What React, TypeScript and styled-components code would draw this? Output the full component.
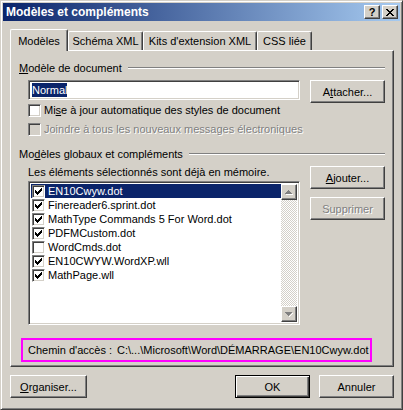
import React from "react";
import styled, { createGlobalStyle, css } from "styled-components";

const FACE = "#D4D0C8";
const SHADOW = "#808080";
const DARK = "#404040";
const FONT = `"Liberation Sans", Arial, sans-serif`;

const Global = createGlobalStyle`
  html, body { margin: 0; padding: 0; background: ${FACE}; }
  * { box-sizing: border-box; }
`;

const Window = styled.div`
  width: 403px;
  height: 410px;
  background: ${FACE};
  border: 1px solid;
  border-color: ${FACE} ${DARK} ${DARK} ${FACE};
  box-shadow: inset 1px 1px #fff, inset -1px -1px ${SHADOW};
  padding: 2px;
  display: flex;
  flex-direction: column;
  font-family: ${FONT};
  font-size: 11px;
  color: #000;
`;

const TitleBar = styled.div`
  height: 18px;
  background: linear-gradient(to right, #0a246a, #a6caf0);
  display: flex;
  align-items: center;
  padding: 0 2px 0 3px;
`;

const TitleText = styled.div`
  flex: 1;
  color: #fff;
  font-weight: bold;
  font-size: 12px;
  font-family: ${FONT};
  letter-spacing: 0px;
`;

const raised = css`
  background: ${FACE};
  border: 1px solid;
  border-color: #fff ${DARK} ${DARK} #fff;
  box-shadow: inset -1px -1px ${SHADOW}, inset 1px 1px ${FACE};
`;

const sunken = css`
  border: 1px solid;
  border-color: ${SHADOW} #fff #fff ${SHADOW};
  box-shadow: inset 1px 1px ${DARK}, inset -1px -1px ${FACE};
`;

const CaptionButton = styled.div`
  ${raised};
  width: 16px;
  height: 14px;
  display: flex;
  align-items: center;
  justify-content: center;
  font-weight: bold;
  font-size: 11px;
  line-height: 1;
  & + & { margin-left: 2px; }
`;

const Body = styled.div`
  flex: 1;
  display: flex;
  flex-direction: column;
  padding: 8px 0 0 7px;
`;

const TabRow = styled.div`
  display: flex;
  align-items: flex-end;
  height: 21px;
  position: relative;
  z-index: 1;
`;

const Tab = styled.div<{ $active?: boolean; $w: number }>`
  width: ${(p) => p.$w}px;
  height: ${(p) => (p.$active ? 22 : 19)}px;
  margin-bottom: ${(p) => (p.$active ? -1 : 0)}px;
  background: ${FACE};
  border-top: 1px solid #fff;
  border-left: 1px solid #fff;
  border-right: 1px solid ${DARK};
  box-shadow: inset -1px 0 ${SHADOW};
  border-radius: 2px 2px 0 0;
  display: flex;
  align-items: ${(p) => (p.$active ? "flex-start" : "center")};
  padding-top: ${(p) => (p.$active ? 5 : 0)}px;
  justify-content: center;
  white-space: nowrap;
`;

const Panel = styled.div`
  width: 384px;
  height: 317px;
  border: 1px solid;
  border-color: #fff ${DARK} ${DARK} #fff;
  box-shadow: inset -1px -1px ${SHADOW};
  padding: 10px 8px 0 8px;
  display: flex;
  flex-direction: column;
`;

const GroupHeader = styled.div<{ $mt?: number }>`
  display: flex;
  align-items: center;
  height: 13px;
  margin-top: ${(p) => p.$mt ?? 0}px;
`;

const GroupLine = styled.div`
  flex: 1;
  height: 2px;
  margin-left: 6px;
  border-top: 1px solid ${SHADOW};
  border-bottom: 1px solid #fff;
`;

const Indent = styled.div`
  padding-left: 9px;
  display: flex;
  flex-direction: column;
`;

const Row = styled.div<{ $mt?: number }>`
  display: flex;
  align-items: flex-start;
  justify-content: space-between;
  margin-top: ${(p) => p.$mt ?? 0}px;
`;

const TextBox = styled.div`
  ${sunken};
  background: #fff;
  width: 272px;
  height: 20px;
  padding: 2px 3px;
  display: flex;
  align-items: center;
`;

const Selected = styled.span`
  background: #0a246a;
  color: #fff;
  line-height: 14px;
`;

const Button = styled.div<{ $disabled?: boolean; $default?: boolean; $w?: number }>`
  ${raised};
  width: ${(p) => p.$w ?? 75}px;
  height: 23px;
  display: flex;
  align-items: center;
  justify-content: center;
  white-space: nowrap;
  ${(p) =>
    p.$disabled &&
    css`
      color: ${SHADOW};
      text-shadow: 1px 1px #fff;
    `}
  ${(p) =>
    p.$default &&
    css`
      border: none;
      outline: 1px solid #000;
      outline-offset: -1px;
      box-shadow: inset 1px 1px 0 1px #fff, inset -2px -2px ${DARK}, inset -3px -3px ${SHADOW};
      border: 1px solid #000;
      box-shadow: inset 1px 1px #fff, inset -1px -1px ${DARK}, inset -2px -2px ${SHADOW};
    `}
`;

const ButtonColumn = styled.div`
  display: flex;
  flex-direction: column;
  gap: 8px;
`;

const CheckRow = styled.label<{ $disabled?: boolean }>`
  display: flex;
  align-items: center;
  height: 19px;
  padding-bottom: 5px;
  gap: 3px;
  ${(p) =>
    p.$disabled &&
    css`
      color: ${SHADOW};
      text-shadow: 1px 1px #fff;
    `}
`;

const CheckBox = styled.div<{ $disabled?: boolean }>`
  ${sunken};
  width: 13px;
  height: 13px;
  flex: none;
  background: ${(p) => (p.$disabled ? FACE : "#fff")};
  display: flex;
  align-items: center;
  justify-content: center;
`;

const ListBox = styled.div`
  ${sunken};
  background: #fff;
  width: 272px;
  height: 144px;
  margin-top: 3px;
  padding: 2px;
  display: flex;
`;

const ListItems = styled.div`
  flex: 1;
  display: flex;
  flex-direction: column;
`;

const ListItem = styled.div<{ $selected?: boolean }>`
  height: 14px;
  display: flex;
  align-items: center;
  padding-left: 1px;
  gap: 3px;
  background: ${(p) => (p.$selected ? "#0a246a" : "transparent")};
  color: ${(p) => (p.$selected ? "#fff" : "#000")};
  white-space: nowrap;
`;

const ScrollBar = styled.div`
  width: 16px;
  display: flex;
  flex-direction: column;
  background: repeating-conic-gradient(${FACE} 0 25%, #fff 0 50%) 0 0 / 2px 2px;
`;

const ScrollTrack = styled.div`
  flex: 1;
`;

const ScrollArrow = styled.div`
  ${raised};
  width: 16px;
  height: 16px;
  display: flex;
  align-items: center;
  justify-content: center;
`;

const PathBox = styled.div`
  margin: 13px 0 0 2px;
  width: 351px;
  height: 24px;
  border: 2px solid #ff00ff;
  display: flex;
  align-items: center;
  padding-left: 5px;
  white-space: nowrap;
`;

const PathLabel = styled.span`
  width: 89px;
`;

const Footer = styled.div`
  display: flex;
  margin-top: 8px;
  width: 384px;
  align-items: center;
`;

const Spacer = styled.div`
  flex: 1;
`;

const FooterGap = styled.div`
  width: 9px;
`;

const U = styled.span`
  text-decoration: underline;
  text-underline-offset: 1px;
`;

const Check = ({ color = "#000" }: { color?: string }) => (
  <svg width="7" height="7" viewBox="0 0 7 7" shapeRendering="crispEdges">
    <path
      fill={color}
      d="M6 0h1v3h-1zM5 1h1v3h-1zM4 2h1v3h-1zM3 3h1v3h-1zM2 4h1v3h-1zM1 3h1v3h-1zM0 2h1v3h-1z"
    />
  </svg>
);

const Arrow = ({ up }: { up?: boolean }) => (
  <svg width="8" height="5" viewBox="0 0 8 5" shapeRendering="crispEdges">
    {up ? (
      <>
        <path fill="#fff" d="M4 1h1v1h-1zM5 2h1v1h-1zM6 3h1v1h-1zM1 4h7v1h-7z" />
        <path fill={SHADOW} d="M3 0h1v1h-1zM2 1h3v1h-3zM1 2h5v1h-5zM0 3h7v1h-7z" />
      </>
    ) : (
      <>
        <path fill="#fff" d="M7 1h1v1h-1zM6 2h1v1h-1zM5 3h1v1h-1zM4 4h1v1h-1z" />
        <path fill={SHADOW} d="M0 0h7v1h-7zM1 1h5v1h-5zM2 2h3v1h-3zM3 3h1v1h-1z" />
      </>
    )}
  </svg>
);

const CloseGlyph = () => (
  <svg width="8" height="7" viewBox="0 0 8 7" shapeRendering="crispEdges">
    <path
      fill="#000"
      d="M0 0h2v1h-2zM6 0h2v1h-2zM1 1h2v1h-2zM5 1h2v1h-2zM2 2h4v1h-4zM3 3h2v1h-2zM2 4h4v1h-4zM1 5h2v1h-2zM5 5h2v1h-2zM0 6h2v1h-2zM6 6h2v1h-2z"
    />
  </svg>
);

const items = [
  { name: "EN10Cwyw.dot", checked: true, selected: true },
  { name: "Finereader6.sprint.dot", checked: true },
  { name: "MathType Commands 5 For Word.dot", checked: true },
  { name: "PDFMCustom.dot", checked: true },
  { name: "WordCmds.dot", checked: false },
  { name: "EN10CWYW.WordXP.wll", checked: true },
  { name: "MathPage.wll", checked: true },
];

export default function App() {
  return (
    <>
      <Global />
      <Window>
        <TitleBar>
          <TitleText>Modèles et compléments</TitleText>
          <CaptionButton>?</CaptionButton>
          <CaptionButton>
            <CloseGlyph />
          </CaptionButton>
        </TitleBar>
        <Body>
          <TabRow>
            <Tab $active $w={58}>Modèles</Tab>
            <Tab $w={75}>Schéma XML</Tab>
            <Tab $w={114}>Kits d'extension XML</Tab>
            <Tab $w={55}>CSS liée</Tab>
          </TabRow>
          <Panel>
            <GroupHeader>
              <span>
                <U>M</U>odèle de document
              </span>
              <GroupLine />
            </GroupHeader>
            <Indent>
              <Row $mt={6}>
                <TextBox>
                  <Selected>Normal</Selected>
                </TextBox>
                <Button>
                  A<U>t</U>tacher...
                </Button>
              </Row>
              <CheckRow>
                <CheckBox />
                <span>
                  Mi<U>s</U>e à jour automatique des styles de document
                </span>
              </CheckRow>
              <CheckRow $disabled>
                <CheckBox $disabled />
                <span>Joindre à tous les nouveaux messages électroniques</span>
              </CheckRow>
            </Indent>
            <GroupHeader $mt={6}>
              <span>
                Mo<U>d</U>èles globaux et compléments
              </span>
              <GroupLine />
            </GroupHeader>
            <Indent>
              <Row $mt={6}>
                <div>
                  <div>Les éléments sélectionnés sont déjà en mémoire.</div>
                  <ListBox>
                    <ListItems>
                      {items.map((it) => (
                        <ListItem key={it.name} $selected={it.selected}>
                          <CheckBox>{it.checked && <Check />}</CheckBox>
                          <span>{it.name}</span>
                        </ListItem>
                      ))}
                    </ListItems>
                    <ScrollBar>
                      <ScrollArrow>
                        <Arrow up />
                      </ScrollArrow>
                      <ScrollTrack />
                      <ScrollArrow>
                        <Arrow />
                      </ScrollArrow>
                    </ScrollBar>
                  </ListBox>
                </div>
                <ButtonColumn>
                  <Button>
                    <U>A</U>jouter...
                  </Button>
                  <Button $disabled>Supprimer</Button>
                </ButtonColumn>
              </Row>
            </Indent>
            <PathBox>
              <PathLabel>Chemin d'accès :</PathLabel>
              <span>C:\...\Microsoft\Word\DÉMARRAGE\EN10Cwyw.dot</span>
            </PathBox>
          </Panel>
          <Footer>
            <Button $w={77}>
              <U>O</U>rganiser...
            </Button>
            <Spacer />
            <Button $default>OK</Button>
            <FooterGap />
            <Button>Annuler</Button>
          </Footer>
        </Body>
      </Window>
    </>
  );
}
